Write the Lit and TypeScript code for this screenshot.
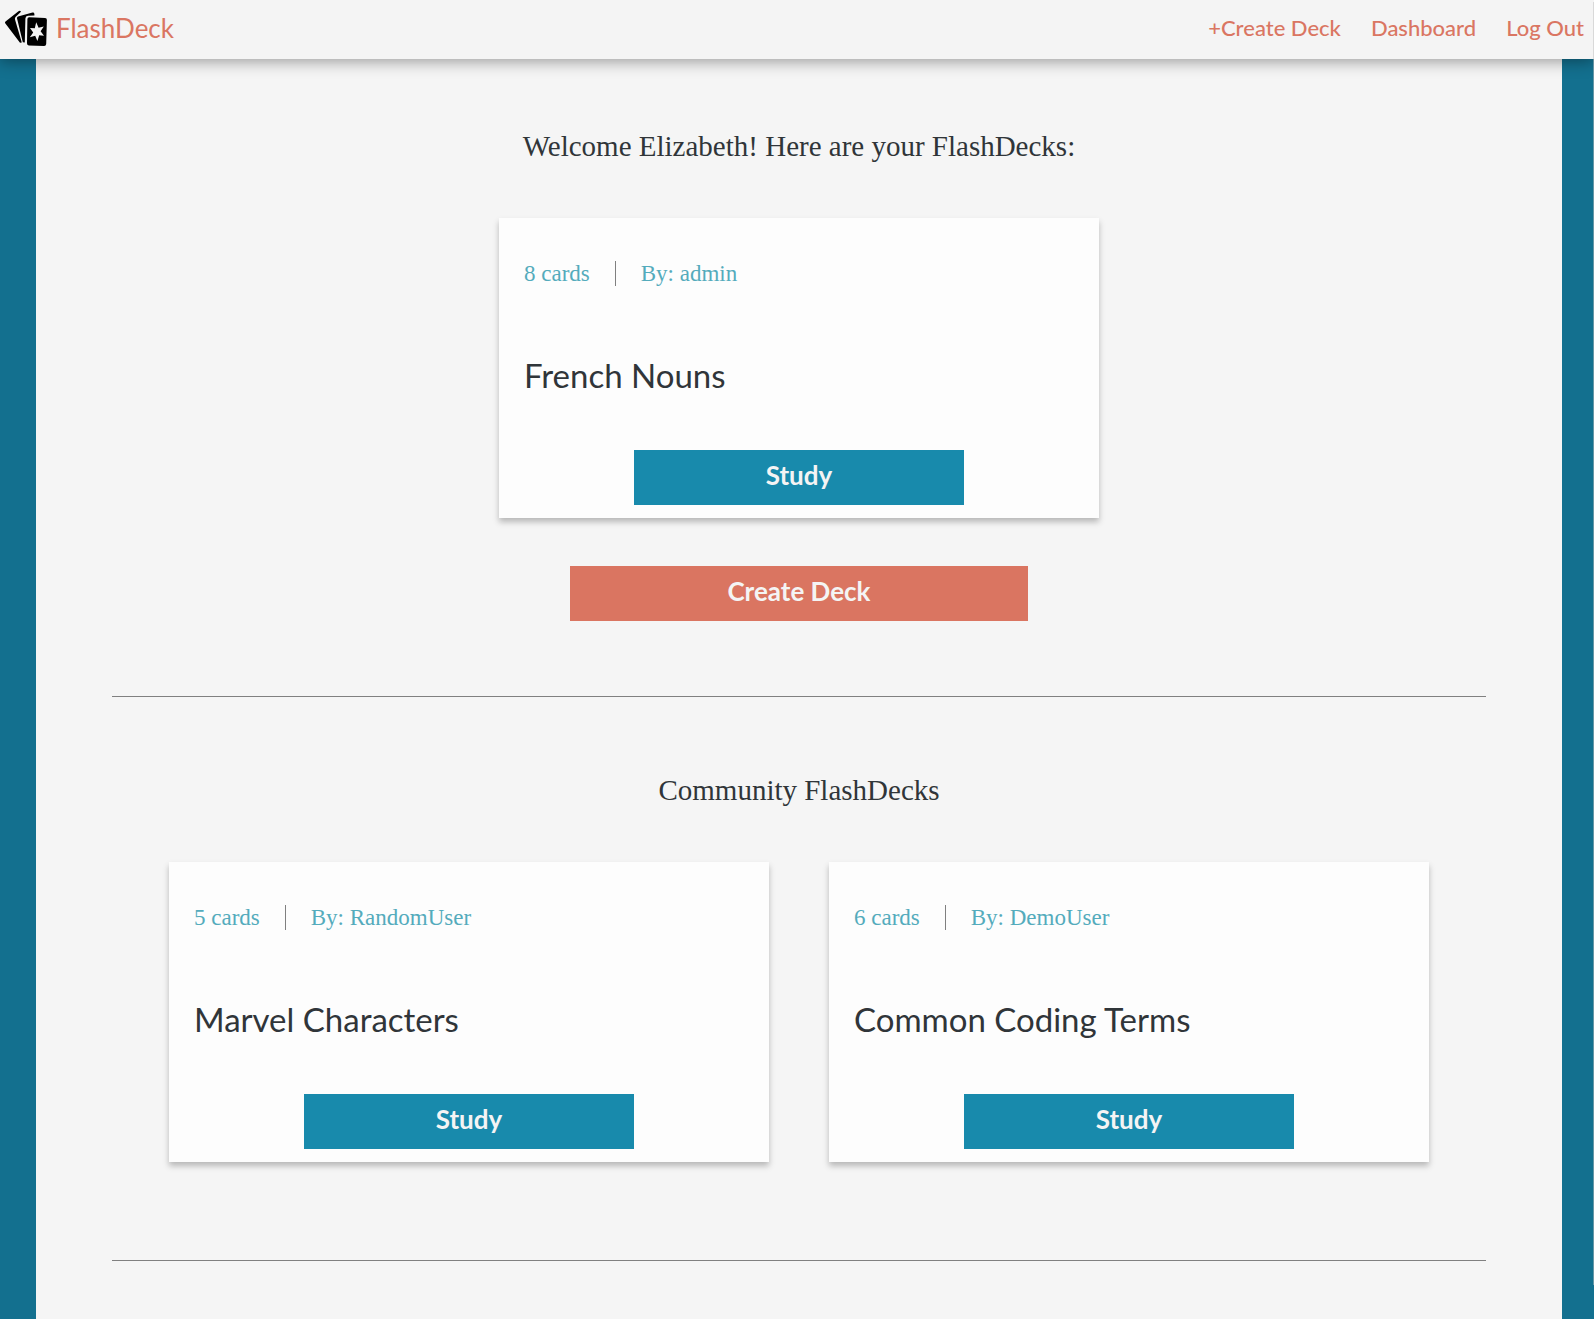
import { LitElement, html, css } from "lit";
import { customElement, property } from "lit/decorators.js";

interface Deck {
  title: string;
  author: string;
  count: number;
}

const ownDecks: Deck[] = [{ title: "French Nouns", author: "admin", count: 8 }];

const communityDecks: Deck[] = [
  { title: "Marvel Characters", author: "RandomUser", count: 5 },
  { title: "Common Coding Terms", author: "DemoUser", count: 6 },
];

@customElement("deck-card")
export class DeckCard extends LitElement {
  @property({ attribute: false }) deck!: Deck;

  static styles = css`
    :host {
      display: block;
      flex: 0 1 600px;
      min-width: 0;
    }
    .card {
      box-sizing: border-box;
      min-height: 300px;
      display: flex;
      flex-direction: column;
      justify-content: space-between;
      padding: 43px 25px 13px;
      background: #fdfdfd;
      box-shadow: 0 4px 6px rgba(0, 0, 0, 0.25);
    }
    .meta {
      display: flex;
      align-items: center;
      margin: 0;
      font: 23px/25px "Liberation Serif", serif;
      color: #54abbc;
    }
    .count {
      padding-right: 25px;
      border-right: 1px solid #808080;
    }
    .author {
      padding-left: 25px;
    }
    .title {
      margin: 0;
      padding-top: 14px;
      font: 400 33px/40px Lato, sans-serif;
      color: #303539;
    }
    .study {
      align-self: center;
      width: 60%;
      height: 55px;
      padding: 0 0 6px;
      border: 0;
      background: #188aac;
      color: #f4f4f4;
      font: 700 26px/30px Lato, sans-serif;
      cursor: pointer;
    }
  `;

  render() {
    return html`
      <article class="card">
        <p class="meta">
          <span class="count">${this.deck.count} cards</span>
          <span class="author">By: ${this.deck.author}</span>
        </p>
        <h3 class="title">${this.deck.title}</h3>
        <button class="study" type="button">Study</button>
      </article>
    `;
  }
}

@customElement("app-root")
export class AppRoot extends LitElement {
  static styles = css`
    :host {
      display: flex;
      flex-direction: column;
      min-height: 100vh;
      background: #13708f;
      font-family: Lato, sans-serif;
    }
    .nav {
      position: relative;
      z-index: 1;
      box-sizing: border-box;
      height: 59px;
      display: flex;
      align-items: center;
      justify-content: space-between;
      padding: 0 10px 3px 4px;
      background: #f4f4f4;
      box-shadow: 0 2px 15px rgba(0, 0, 0, 0.4);
    }
    .brand {
      display: flex;
      align-items: center;
      gap: 8px;
      color: #da7662;
      font-size: 26px;
      line-height: 32px;
      text-decoration: none;
    }
    .logo {
      display: block;
      width: 44px;
      height: 38px;
    }
    .links {
      display: flex;
      gap: 30px;
    }
    .link {
      color: #da7662;
      font-size: 22px;
      font-weight: 500;
      line-height: 32px;
      text-decoration: none;
    }
    .page {
      flex: 1;
      margin: 0 32px 0 36px;
      background: #f5f5f5;
    }
    .section {
      width: 90%;
      margin: 0 auto;
      display: flex;
      flex-direction: column;
      align-items: center;
      border-bottom: 1px solid #808080;
    }
    .own {
      padding: 67px 0 75px;
    }
    .community {
      padding: 73px 0 98px;
    }
    .heading {
      margin: 0 0 52px;
      font: 400 29px/40px "Liberation Serif", serif;
      color: #303539;
    }
    .decks {
      align-self: stretch;
      display: flex;
      justify-content: center;
      gap: 60px;
    }
    .create {
      width: 33.333%;
      height: 55px;
      margin-top: 48px;
      padding: 0 0 6px;
      border: 0;
      background: #da7561;
      color: #f4f4f4;
      font: 700 26px/30px Lato, sans-serif;
      cursor: pointer;
    }
    .thumb {
      position: fixed;
      z-index: 2;
      top: 2px;
      right: 0;
      bottom: 34px;
      width: 1px;
      background: rgba(190, 190, 190, 0.5);
    }
  `;

  private renderDecks(decks: Deck[]) {
    return html`
      <div class="decks">
        ${decks.map((deck) => html`<deck-card .deck=${deck}></deck-card>`)}
      </div>
    `;
  }

  render() {
    return html`
      <nav class="nav">
        <a class="brand" href="#home">
          <svg class="logo" viewBox="0 0 44 38" aria-hidden="true">
            <path d="M1.5 12.5 L14.5 2.2 Q16.2 1.2 17 2.8 L11.5 8 Q10.6 9 11 10.5 L17.8 33.5 L16 33.8 L1.2 14.3 Q0.6 13.3 1.5 12.5Z" />
            <path d="M13 9.3 Q12.8 8.2 14 7.6 L28.5 3.6 Q30.2 3.3 30.4 5 V6.6 L24 6.8 Q21.5 7 21.4 9.5 L20.8 33.5 L18.8 33.2Z" />
            <path d="M25.3 8.2 L41 9 Q43 9.1 42.9 11 L42.2 35 Q42 37 40 36.9 L24.8 36.4 Q22.9 36.2 23 34.3 L23.4 10 Q23.5 8.1 25.3 8.2Z" />
            <path fill="#f4f4f4" d="M32.2 13.2 L34.6 18.8 L39.8 17.6 L36.6 22.3 L40 26.8 L35.2 26.3 L33.4 32 L31.2 26.8 L25.8 28.2 L29.2 23.5 L26 19 L30.8 19.2Z" />
          </svg>
          <span>FlashDeck</span>
        </a>
        <div class="links">
          <a class="link" href="#create">+Create Deck</a>
          <a class="link" href="#dashboard">Dashboard</a>
          <a class="link" href="#logout">Log Out</a>
        </div>
      </nav>
      <main class="page">
        <section class="section own">
          <h2 class="heading">Welcome Elizabeth! Here are your FlashDecks:</h2>
          ${this.renderDecks(ownDecks)}
          <button class="create" type="button">Create Deck</button>
        </section>
        <section class="section community">
          <h2 class="heading">Community FlashDecks</h2>
          ${this.renderDecks(communityDecks)}
        </section>
      </main>
      <div class="thumb"></div>
    `;
  }
}
